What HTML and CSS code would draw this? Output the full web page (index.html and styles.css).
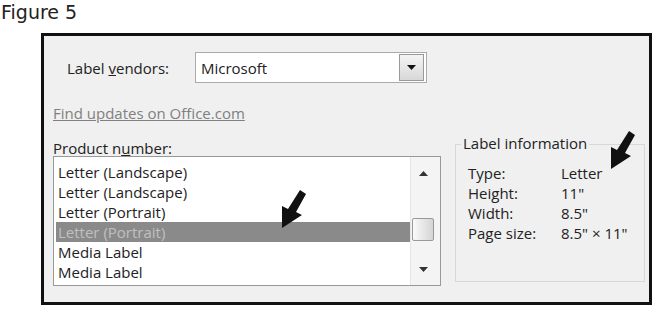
FILE: index.html
```html
<!DOCTYPE html>
<html>
<head>
    <title>Figure 5</title>
    <link rel="stylesheet" href="styles.css">
</head>
<body>
    <h1 class="fig-title">Figure 5</h1>

    <div class="dialog">
        <div class="left">
            <div class="vendor-row">
                <label class="vendor-label">Label <u>v</u>endors:</label>
                <div class="combo">
                    <span class="combo-text">Microsoft</span>
                    <span class="combo-btn">
                        <svg width="9" height="5" viewBox="0 0 9 5"><path d="M0 0h9L4.5 5z" fill="#111"/></svg>
                    </span>
                </div>
            </div>
            <a class="link">Find updates on Office.com</a>
            <div class="list-title">Product n<u>u</u>mber:</div>
            <div class="listbox">
                <ul class="items">
                    <li>Letter (Landscape)</li>
                    <li>Letter (Landscape)</li>
                    <li>Letter (Portrait)</li>
                    <li class="selected">Letter (Portrait)</li>
                    <li>Media Label</li>
                    <li>Media Label</li>
                </ul>
                <div class="scrollbar">
                    <svg class="sb-up" width="9" height="5" viewBox="0 0 9 5"><path d="M0 5h9L4.5 0z" fill="#333"/></svg>
                    <div class="thumb"></div>
                    <svg class="sb-down" width="9" height="5" viewBox="0 0 9 5"><path d="M0 0h9L4.5 5z" fill="#333"/></svg>
                </div>
            </div>
        </div>

        <div class="info">
            <div class="info-title">Label information</div>
            <div class="info-grid">
                <span>Type:</span><span>Letter</span>
                <span>Height:</span><span>11"</span>
                <span>Width:</span><span>8.5"</span>
                <span>Page size:</span><span>8.5" &times; 11"</span>
            </div>
        </div>

        <!-- pointer arrows drawn over the dialog -->
        <svg class="arrow arrow-list" width="30" height="42" viewBox="0 0 30 42">
            <path d="M4 40 L4 18 L10 21 L22 2 L28 6 L18 24 L24 27 Z" fill="#111"/>
        </svg>
        <svg class="arrow arrow-info" width="30" height="42" viewBox="0 0 30 42">
            <path d="M4 40 L4 18 L10 21 L22 2 L28 6 L18 24 L24 27 Z" fill="#111"/>
        </svg>
    </div>
</body>
</html>
```

FILE: styles.css
```css
body {
    margin: 0;
    background: #fff;
    font-family: "Open Sans", "Noto Sans", sans-serif;
    color: #222;
}
.fig-title {
    font-family: "DejaVu Sans", sans-serif;
    font-weight: normal;
    font-size: 19px;
    line-height: 24px;
    margin: 0;
    padding: 0 0 0 1px;
    height: 33px;
    color: #222;
}
.dialog {
    position: relative;
    margin-left: 41px;
    width: 605px;
    height: 266px;
    border: 3px solid #111;
    background: #f0f0f0;
    display: flex;
    font-size: 15px;
}
.left {
    width: 388px;
    padding: 0 0 0 9px;
}
.vendor-row {
    display: flex;
    align-items: center;
    margin-top: 16px;
    height: 31px;
}
.vendor-label {
    width: 128px;
    padding-left: 14px;
    color: #222;
}
.combo {
    display: flex;
    align-items: center;
    width: 230px;
    height: 29px;
    border: 1px solid #aaa;
    background: #fff;
}
.combo-text {
    flex: 1;
    padding-left: 5px;
}
.combo-btn {
    width: 23px;
    height: 25px;
    margin-right: 2px;
    border: 1px solid #999;
    background: linear-gradient(#f4f4f4, #d8d8d8);
    display: flex;
    align-items: center;
    justify-content: center;
}
.link {
    display: block;
    margin-top: 20px;
    line-height: 20px;
    color: #808080;
    text-decoration: underline;
}
.list-title {
    margin-top: 16px;
    line-height: 18px;
}
.listbox {
    display: flex;
    margin-top: -1px;
    height: 128px;
    border: 1px solid #999;
    background: #fff;
}
.items {
    list-style: none;
    margin: 0;
    padding: 5px 0 0 2px;
    flex: 1;
}
.items li {
    height: 20px;
    line-height: 20px;
    padding-left: 2px;
}
.items li.selected {
    background: #8a8a8a;
    color: #c0c0c0;
}
.scrollbar {
    width: 29px;
    position: relative;
    background: #f4f4f4;
    border-left: 1px solid #e6e6e6;
}
.sb-up {
    position: absolute;
    left: 8px;
    top: 14px;
}
.sb-down {
    position: absolute;
    left: 8px;
    top: 110px;
}
.thumb {
    position: absolute;
    left: 1px;
    top: 61px;
    width: 20px;
    height: 21px;
    border: 1px solid #999;
    border-radius: 2px;
    background: linear-gradient(90deg, #fafafa, #d4d4d4);
}
.info {
    margin-left: 14px;
    margin-right: 4px;
    margin-top: 108px;
    height: 136px;
    flex: 1;
    border: 1px solid #d8d8d8;
    position: relative;
}
.info-title {
    position: absolute;
    top: -12px;
    left: 5px;
    padding: 0 2px;
    background: #f0f0f0;
}
.info-grid {
    display: grid;
    grid-template-columns: 93px auto;
    margin: 18px 0 0 12px;
    line-height: 20px;
}
.arrow {
    position: absolute;
}
.arrow-list {
    left: 234px;
    top: 152px;
}
.arrow-info {
    left: 563px;
    top: 93px;
}
```
